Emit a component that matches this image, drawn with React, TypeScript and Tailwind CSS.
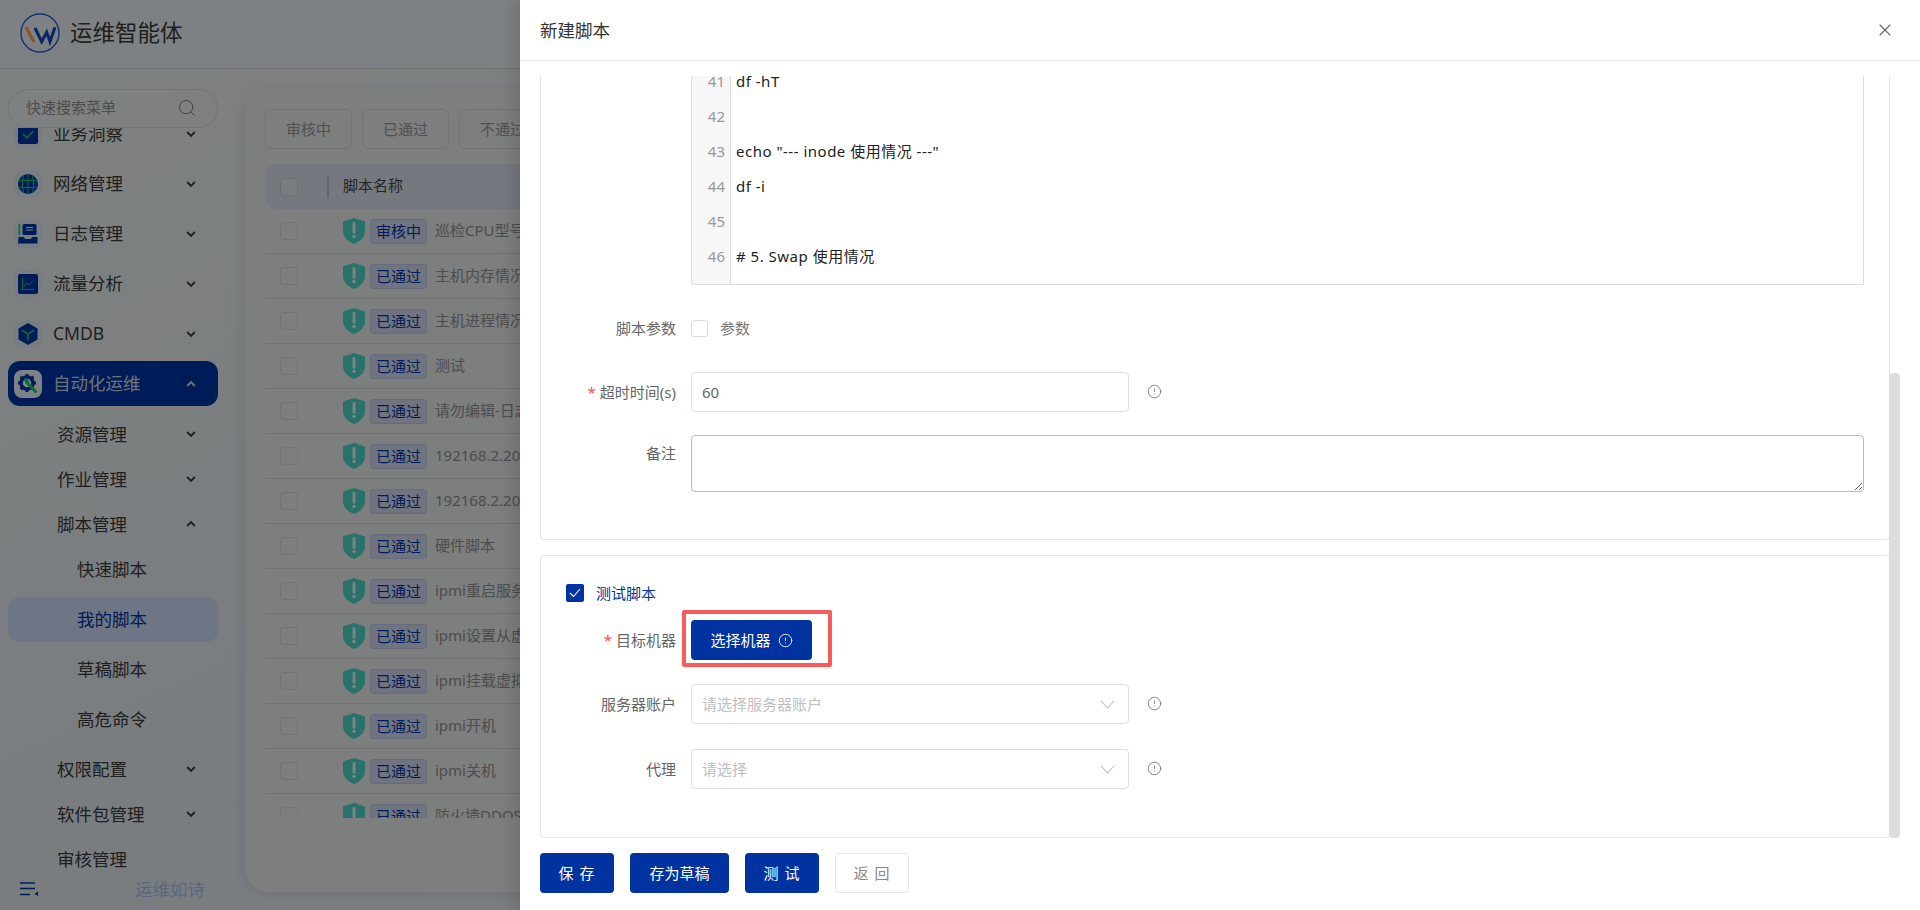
import { CircleAlert, Search, X } from "lucide-react"

const navy = "#0033a0"
const green = "#17c964"

const Chevron = ({ up }: { up?: boolean }) => (
  <svg width="12" height="12" viewBox="0 0 12 12" fill="none" className={up ? "rotate-180" : ""}>
    <path d="M2.2 4l3.8 3.8L9.8 4" stroke="currentColor" strokeWidth="1.9" />
  </svg>
)

const BizIcon = () => (
  <svg width="20" height="20" viewBox="0 0 20 20" fill="none">
    <rect width="20" height="20" rx="2" fill={navy} />
    <path d="M5 10l4 4 6-7" stroke={green} strokeWidth="1.400" />
  </svg>
)

const GlobeIcon = () => (
  <svg width="20" height="20" viewBox="0 0 20 20" fill="none">
    <circle cx="10" cy="10" r="10" fill={navy} />
    <path d="M0 6.500h20M0 13.500h20M10 0v20M5.500 1.500c-1.500 5-1.500 12 0 17M14.500 1.500c1.500 5 1.500 12 0 17" stroke={green} strokeWidth="1" />
  </svg>
)

const LogIcon = () => (
  <svg width="20" height="20" viewBox="0 0 20 20" fill="none">
    <rect x="0.500" y="0" width="1.800" height="11" fill={green} />
    <rect x="4.500" y="0" width="14" height="11" rx="1.500" fill={navy} />
    <path d="M8 3.500h7M8 6h7" stroke="#d7def0" strokeWidth="1.200" />
    <path d="M0.500 13h5.500l1 2h6l1-2h5.500v6.500h-19.500z" fill={navy} />
  </svg>
)

const ChartIcon = () => (
  <svg width="20" height="20" viewBox="0 0 20 20" fill="none">
    <rect width="20" height="20" rx="2" fill={navy} />
    <path d="M4.500 4v11.500h11.500" stroke={green} strokeWidth="0.900" />
    <path d="M5.500 13l3-4 2.500 2 4-4.500" stroke={green} strokeWidth="0.900" />
  </svg>
)

const CubeIcon = () => (
  <svg width="20" height="22" viewBox="0 0 20 22" fill="none">
    <path d="M10 0l9.500 5.500v11L10 22 .5 16.500v-11z" fill={navy} />
    <path d="M4 7.500l6 3.500 6-3.500M10 11v6.500" stroke={green} strokeWidth="1.500" />
  </svg>
)

const GearIcon = () => (
  <svg width="22" height="22" viewBox="0 0 22 22" fill="none">
    <circle cx="10" cy="10" r="6" stroke={navy} strokeWidth="3.500" />
    <path d="M10 1v3M10 16v3M1 10h3M16 10h3M3.600 3.600l2.200 2.200M14.200 14.200l2.200 2.200M3.600 16.400l2.200-2.200M14.200 5.800l2.200-2.200" stroke={navy} strokeWidth="3" />
    <path d="M9.500 9l9 9.500" stroke={green} strokeWidth="3" strokeLinecap="round" />
    <path d="M7 5.500a4 4 0 0 1 5 4.500l-2 .5-3-3z" fill={green} />
  </svg>
)

const Logo = () => (
  <svg width="40" height="40" viewBox="0 0 40 40" fill="none">
    <circle cx="20" cy="20" r="19" stroke="#2558d8" strokeWidth="1.400" />
    <path d="M6 14l8 15" stroke="#ff9a3a" strokeWidth="3" />
    <path d="M15 15l6.700 13.700 5-9.400 3.300 9.400 5-14.400" stroke="#1443c0" strokeWidth="3" />
  </svg>
)

const Shield = () => (
  <svg width="22" height="26" viewBox="0 0 22 26" fill="none" className="shrink-0">
    <path d="M11 0l11 3.500v9.500c0 6-4.500 10.500-11 13C4.500 23.500 0 19 0 13V3.500z" fill="#4ccfc0" />
    <path d="M11 5.500v9" stroke="#e8f0ee" strokeWidth="2.800" strokeLinecap="round" />
    <circle cx="11" cy="18.500" r="1.700" fill="#e8f0ee" />
  </svg>
)

const TopItem = ({ icon, label }: { icon: React.ReactNode; label: string }) => (
  <div className="flex h-[45px] items-center pl-[6px] pr-[21px] mb-[5px] shrink-0">
    <span className="flex h-7 w-7 shrink-0 items-center justify-center rounded-lg bg-[#dbe2ef]">{icon}</span>
    <span className="ml-[11px] flex-1 text-[17.500px]">{label}</span>
    <Chevron />
  </div>
)

const SubItem = ({ label, up, arrow = true }: { label: string; up?: boolean; arrow?: boolean }) => (
  <div className="flex h-10 items-center pl-[49px] pr-[21px] shrink-0">
    <span className="flex-1 text-[17.500px]">{label}</span>
    {arrow && <Chevron up={up} />}
  </div>
)

const LeafItem = ({ label, active }: { label: string; active?: boolean }) => (
  <div className={`flex h-[45px] items-center rounded-xl pl-[69px] text-[17.500px] shrink-0 ${active ? "bg-[#c8d6f2] text-[#0033a0]" : ""}`}>
    {label}
  </div>
)

const rows = [
  ["审核中", "巡检CPU型号"],
  ["已通过", "主机内存情况"],
  ["已通过", "主机进程情况"],
  ["已通过", "测试"],
  ["已通过", "请勿编辑-日志"],
  ["已通过", "192168.2.20"],
  ["已通过", "192168.2.20"],
  ["已通过", "硬件脚本"],
  ["已通过", "ipmi重启服务"],
  ["已通过", "ipmi设置从虚"],
  ["已通过", "ipmi挂载虚拟"],
  ["已通过", "ipmi开机"],
  ["已通过", "ipmi关机"],
  ["已通过", "防火墙DDOS"]
]

const lines = [
  [41, "df -hT"],
  [42, ""],
  [43, 'echo "--- inode 使用情况 ---"'],
  [44, "df -i"],
  [45, ""],
  [46, "# 5. Swap 使用情况"],
  [47, ""]
]

const Info = () => <CircleAlert size={15} strokeWidth={1.4} className="mb-[2px] ml-[18px] shrink-0 text-[#777]" />

const Label = ({ text, required }: { text: string; required?: boolean }) => (
  <div className="w-[135px] shrink-0 text-right text-[15px] text-[#666]">
    {required && <span className="mr-[4px] text-[#ff4d4f]">*</span>}
    {text}
  </div>
)

const SelectBox = ({ placeholder }: { placeholder: string }) => (
  <div className="ml-[15px] flex h-10 w-[438px] items-center justify-between rounded border border-[#e0e0e0] pl-[10px] pr-[13px] text-[15px] text-[#c0c0c0]">
    {placeholder}
    <svg width="15" height="9" viewBox="0 0 15 9" fill="none">
      <path d="M1 1l6.500 7L14 1" stroke="#bbb" strokeWidth="1.100" />
    </svg>
  </div>
)

const PrimaryButton = ({ text, width }: { text: string; width: string }) => (
  <button className={`h-10 rounded bg-[#0033a0] text-[15px] text-white ${width}`}>{text}</button>
)

export default function App() {
  return (
    <div className="relative flex h-[910px] w-full flex-col overflow-hidden bg-[#e6ebee] font-['Noto_Sans','Noto_Sans_CJK_SC',sans-serif] text-[#3a3a3a]">
      <header className="flex h-[69px] shrink-0 items-center border-b border-[#cdd2d4] pl-5 pb-[2px]">
        <Logo />
        <span className="ml-[10px] text-[22.500px]">运维智能体</span>
      </header>

      <div className="flex min-h-0 flex-1 bg-gradient-to-br from-[#e7eceb] via-[#dde3ea] to-[#e4e6e8]">
        <aside className="flex w-[245px] shrink-0 flex-col">
          <div className="ml-2 mt-5 flex h-[39px] w-[210px] shrink-0 items-center justify-between rounded-full border border-[#cfd4d8] pl-[17px] pr-[20px] pb-[2px] text-[15px] text-[#8a8a8a]">
            快速搜索菜单
            <Search size={20} strokeWidth={1.2} className="text-[#777]" />
          </div>
          <nav className="ml-2 min-h-0 w-[210px] flex-1 overflow-hidden">
            <div className="-mt-[17px] flex flex-col">
              <TopItem icon={<BizIcon />} label="业务洞察" />
              <TopItem icon={<GlobeIcon />} label="网络管理" />
              <TopItem icon={<LogIcon />} label="日志管理" />
              <TopItem icon={<ChartIcon />} label="流量分析" />
              <TopItem icon={<CubeIcon />} label="CMDB" />
              <div className="flex h-[45px] shrink-0 items-center rounded-xl bg-[#0033a0] pl-[6px] pr-[21px] text-[#c8cfdd]">
                <span className="flex h-7 w-7 shrink-0 items-center justify-center rounded-lg bg-[#e6ebf2]">
                  <GearIcon />
                </span>
                <span className="ml-[11px] flex-1 text-[17.500px]">自动化运维</span>
                <Chevron up />
              </div>
              <div className="mt-2 flex flex-col gap-[5px]">
                <SubItem label="资源管理" />
                <SubItem label="作业管理" />
                <SubItem label="脚本管理" up />
              </div>
              <div className="mt-[3px] flex flex-col gap-[5px]">
                <LeafItem label="快速脚本" />
                <LeafItem label="我的脚本" active />
                <LeafItem label="草稿脚本" />
                <LeafItem label="高危命令" />
              </div>
              <div className="mt-[7px] flex flex-col gap-[5px]">
                <SubItem label="权限配置" />
                <SubItem label="软件包管理" />
                <SubItem label="审核管理" arrow={false} />
              </div>
            </div>
          </nav>
          <div className="flex h-[38px] shrink-0 items-center pl-5 pb-[4px]">
            <svg width="18" height="14" viewBox="0 0 18 14" fill="none">
              <path d="M0 1h15M0 6.500h15M0 12.500h10" stroke={navy} strokeWidth="1.500" />
              <path d="M18 9.500v4.500l-3.500-2.200z" fill={navy} />
            </svg>
            <span className="ml-[97px] text-[17.500px] text-[#a8bce8]">运维如诗</span>
          </div>
        </aside>

        <main className="mt-5 mb-[18px] flex min-w-0 flex-1 flex-col rounded-l-3xl bg-[#e3e5e6] p-5 shadow-[-2px_2px_14px_rgba(120,130,150,0.18)]">
          <div className="flex shrink-0 gap-[10px] text-[15px] text-[#939393]">
            {["审核中", "已通过", "不通过"].map(t => (
              <div key={t} className="flex h-10 w-[87px] items-center justify-center rounded-md border border-[#cfd2d4]">
                {t}
              </div>
            ))}
          </div>
          <div className="mt-[15px] flex h-[45px] shrink-0 items-center rounded-xl bg-[#d6dce8] pl-[15px] text-[15px] text-[#444]">
            <span className="h-[18px] w-[18px] rounded-[3px] border border-[#c6cbd2] bg-[#dfe3e8]" />
            <span className="ml-[29px] h-[22px] w-[2px] bg-[#b5bac2]" />
            <span className="mb-[2px] ml-[14px]">脚本名称</span>
          </div>
          <div className="h-[609px] shrink-0 overflow-hidden">
            {rows.map(([status, name], i) => (
              <div key={i} className="flex h-[45px] items-center border-b border-[#cdd0d2] pl-[15px] text-[15px] text-[#8c8c8c]">
                <span className="h-[18px] w-[18px] shrink-0 rounded-[3px] border border-[#cfd2d4] bg-[#e4e6e7]" />
                <span className="ml-[45px]">
                  <Shield />
                </span>
                <span className="ml-[5px] flex h-[25px] w-[57px] shrink-0 items-center justify-center rounded-[3px] border border-[#bcc5de] bg-[#ccd4ea] text-[#0033a0]">
                  {status}
                </span>
                <span className="mb-[2px] ml-2 whitespace-nowrap">{name}</span>
              </div>
            ))}
          </div>
        </main>
      </div>

      <div className="absolute inset-0 bg-black/45" />

      <section className="absolute bottom-0 right-0 top-0 flex w-[1400px] flex-col bg-white text-[15px] shadow-[-6px_0_16px_rgba(0,0,0,0.12)]">
        <div className="flex h-[61px] shrink-0 items-center justify-between border-b border-[#e8e8e8] pl-5 pr-[25px]">
          <span className="text-[17.500px] text-[#333]">新建脚本</span>
          <X size={20} strokeWidth={1.3} className="text-[#666]" />
        </div>

        <div className="flex min-h-0 flex-1 pl-5 pr-5 pt-[15px]">
          <div className="flex w-[1350px] flex-col">
            <div className="h-[464px] shrink-0 rounded-b border-x border-b border-[#e5e5e5]">
              <div className="ml-[150px] mr-[25px] flex h-[209px] overflow-hidden rounded-bl border-x border-b border-[#dcdcdc]">
                <div className="w-[39px] shrink-0 border-r border-[#dcdcdc] bg-[#f7f7f7] pr-[5px] text-right text-[#999]">
                  <div className="-mt-[12px]">
                    {lines.map(([n]) => (
                      <div key={n} className="flex h-[35px] items-center justify-end">{n}</div>
                    ))}
                  </div>
                </div>
                <div className="flex-1 pl-[5px] tracking-[0.5px] text-[#222]">
                  <div className="-mt-[12px]">
                    {lines.map(([n, code]) => (
                      <div key={n} className="flex h-[35px] items-center whitespace-pre">{code}</div>
                    ))}
                  </div>
                </div>
              </div>

              <div className="mt-[23px] flex h-10 items-center">
                <Label text="脚本参数" />
                <span className="ml-[15px] h-[17px] w-[17px] rounded-[3px] border border-[#ddd]" />
                <span className="ml-3 text-[#777]">参数</span>
              </div>

              <div className="mt-6 flex h-10 items-center">
                <Label text="超时时间(s)" required />
                <input
                  defaultValue="60"
                  className="ml-[15px] h-10 w-[438px] rounded border border-[#e0e0e0] px-[10px] text-[#666] outline-none"
                />
                <Info />
              </div>

              <div className="mt-[23px] flex items-start">
                <div className="pt-[7px]">
                  <Label text="备注" />
                </div>
                <textarea className="ml-[15px] h-[57px] w-[1173px] resize-y rounded border border-[#bbb] outline-none" />
              </div>
            </div>

            <div className="mt-[15px] h-[283px] shrink-0 rounded border border-[#e5e5e5] pt-[28px]">
              <div className="flex h-[18px] items-center pl-[25px]">
                <span className="flex h-[18px] w-[18px] items-center justify-center rounded-[2px] bg-[#0033a0]">
                  <svg width="12" height="10" viewBox="0 0 12 10" fill="none">
                    <path d="M1 5l3.500 3.500L11 1" stroke="white" strokeWidth="1.100" />
                  </svg>
                </span>
                <span className="ml-3 text-[#0033a0]">测试脚本</span>
              </div>

              <div className="mt-[18px] flex h-10 items-center">
                <Label text="目标机器" required />
                <div className="relative ml-[15px]">
                  <button className="flex h-10 w-[121px] items-center justify-center rounded bg-[#0033a0] text-white">
                    选择机器
                    <CircleAlert size={15} strokeWidth={1.4} className="ml-[7px]" />
                  </button>
                  <div className="absolute -bottom-[7px] -left-[9px] -right-[20px] -top-[10px] rounded-[2px] border-4 border-[#f95a5a]" />
                </div>
              </div>

              <div className="mt-6 flex h-10 items-center">
                <Label text="服务器账户" />
                <SelectBox placeholder="请选择服务器账户" />
                <Info />
              </div>

              <div className="mt-[25px] flex h-10 items-center">
                <Label text="代理" />
                <SelectBox placeholder="请选择" />
                <Info />
              </div>
            </div>
          </div>
          <div className="relative -ml-px flex w-[11px] flex-col justify-end">
            <div className="h-[465px] rounded bg-[#dcddde]" />
          </div>
        </div>

        <div className="flex h-[72px] shrink-0 gap-4 pl-5 pt-[15px]">
          <PrimaryButton text="保 存" width="w-[74px] tracking-[1px]" />
          <PrimaryButton text="存为草稿" width="w-[99px]" />
          <PrimaryButton text="测 试" width="w-[74px] tracking-[1px]" />
          <button className="h-10 w-[74px] rounded border border-[#e5e5e5] text-[15px] tracking-[1px] text-[#888]">返 回</button>
        </div>
      </section>
    </div>
  )
}
